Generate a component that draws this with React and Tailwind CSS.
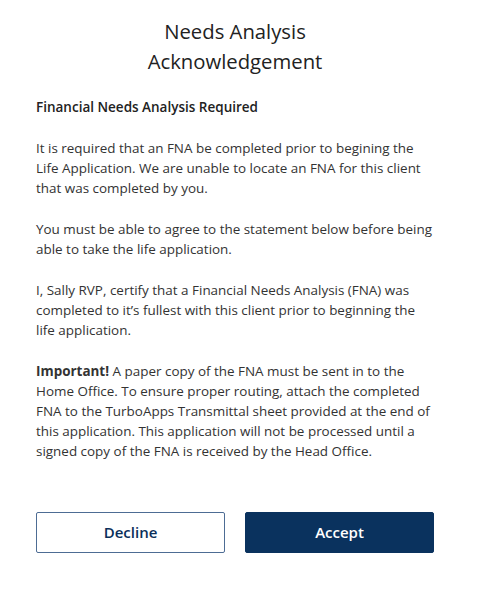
export default function App() {
  return (
    <div className="bg-white min-h-[603px] w-[500px] font-['Open_Sans',sans-serif] text-[#333333]">
      <div className="ml-[36px] w-[398px] pt-[16px]">
        <h1 className="text-center text-[20.3px] leading-[30px] text-[#222222] font-normal">
          Needs Analysis
          <br />
          Acknowledgement
        </h1>
        <h2 className="mt-[21px] text-[13.5px] leading-[20px] font-semibold text-[#222222]">
          Financial Needs Analysis Required
        </h2>
        <div className="text-[13.45px] leading-[20px] mt-[21px] flex flex-col gap-[21px]">
          <p>
            It is required that an FNA be completed prior to begining the Life Application. We are unable to locate an FNA for this client that was completed by you.
          </p>
          <p>
            You must be able to agree to the statement below before being able to take the life application.
          </p>
          <p>
            I, Sally RVP, certify that a Financial Needs Analysis (FNA) was completed to it’s fullest with this client prior to beginning the life application.
          </p>
          <p>
            <span className="font-bold">Important!</span> A paper copy of the FNA must be sent in to the Home Office. To ensure proper routing, attach the completed FNA to the TurboApps Transmittal sheet provided at the end of this application. This application will not be processed until a signed copy of the FNA is received by the Head Office.
          </p>
        </div>
        <div className="mt-[51px] flex gap-[20px]">
          <button className="flex-1 h-[41px] rounded-[2px] border border-[#4d6c94] bg-white text-[#0a2f5a] text-[15px] font-semibold">
            Decline
          </button>
          <button className="flex-1 h-[41px] rounded-[2px] border border-[#0a325e] bg-[#0a325e] text-white text-[15px] font-semibold">
            Accept
          </button>
        </div>
      </div>
    </div>
  );
}
